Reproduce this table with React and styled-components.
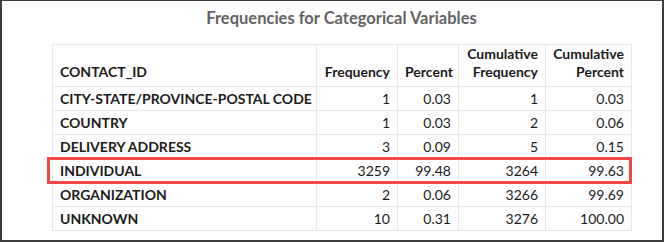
import styled, { createGlobalStyle } from "styled-components";

const Global = createGlobalStyle`
  body {
    margin: 0;
    background: #ffffff;
    font-family: Lato, "Noto Sans", sans-serif;
  }
`;

const Frame = styled.div`
  width: 664px;
  height: 242px;
  box-sizing: border-box;
  border: 2px solid #3c3c3c;
  border-top-width: 1px;
  padding: 6px 0 0 50px;
  background: #fff;
`;

const Block = styled.div`
  width: 579px;
  display: flex;
  flex-direction: column;
`;

const Title = styled.div`
  text-align: center;
  font-size: 16.5px;
  font-weight: 700;
  color: #636363;
  height: 37px;
  line-height: 22px;
`;

const Wrap = styled.div`
  position: relative;
`;

const Table = styled.table`
  width: 579px;
  border-collapse: collapse;
  table-layout: fixed;
  font-size: 14px;
  color: #1b1b1b;
`;

const Th = styled.th`
  border: 1px solid #e8e8e8;
  padding: 0 7px 5px;
  height: 41px;
  box-sizing: border-box;
  vertical-align: bottom;
  text-align: ${(p) => (p.$left ? "left" : "right")};
  font-weight: 700;
  line-height: 18px;
`;

const Td = styled.td`
  border: 1px solid #e8e8e8;
  padding: 0 7px;
  height: 24px;
  box-sizing: border-box;
  text-align: ${(p) => (p.$label ? "left" : "right")};
  font-weight: ${(p) => (p.$label ? 700 : 400)};
  white-space: nowrap;
`;

const Highlight = styled.div`
  position: absolute;
  left: -5px;
  top: 113px;
  width: 585px;
  height: 27px;
  box-sizing: border-box;
  border: 3px solid #f5464a;
  pointer-events: none;
`;

const cols = [264, 81, 61, 87, 86];

const rows = [
  ["CITY-STATE/PROVINCE-POSTAL CODE", "1", "0.03", "1", "0.03"],
  ["COUNTRY", "1", "0.03", "2", "0.06"],
  ["DELIVERY ADDRESS", "3", "0.09", "5", "0.15"],
  ["INDIVIDUAL", "3259", "99.48", "3264", "99.63"],
  ["ORGANIZATION", "2", "0.06", "3266", "99.69"],
  ["UNKNOWN", "10", "0.31", "3276", "100.00"],
];

export default function App() {
  return (
    <>
      <Global />
      <Frame>
        <Block>
          <Title>Frequencies for Categorical Variables</Title>
          <Wrap>
            <Table>
              <colgroup>
                {cols.map((w, i) => (
                  <col key={i} style={{ width: w }} />
                ))}
              </colgroup>
              <thead>
                <tr>
                  <Th $left>CONTACT_ID</Th>
                  <Th>Frequency</Th>
                  <Th>Percent</Th>
                  <Th>
                    Cumulative
                    <br />
                    Frequency
                  </Th>
                  <Th>
                    Cumulative
                    <br />
                    Percent
                  </Th>
                </tr>
              </thead>
              <tbody>
                {rows.map((r) => (
                  <tr key={r[0]}>
                    {r.map((v, i) => (
                      <Td key={i} $label={i === 0}>
                        {v}
                      </Td>
                    ))}
                  </tr>
                ))}
              </tbody>
            </Table>
            <Highlight />
          </Wrap>
        </Block>
      </Frame>
    </>
  );
}
